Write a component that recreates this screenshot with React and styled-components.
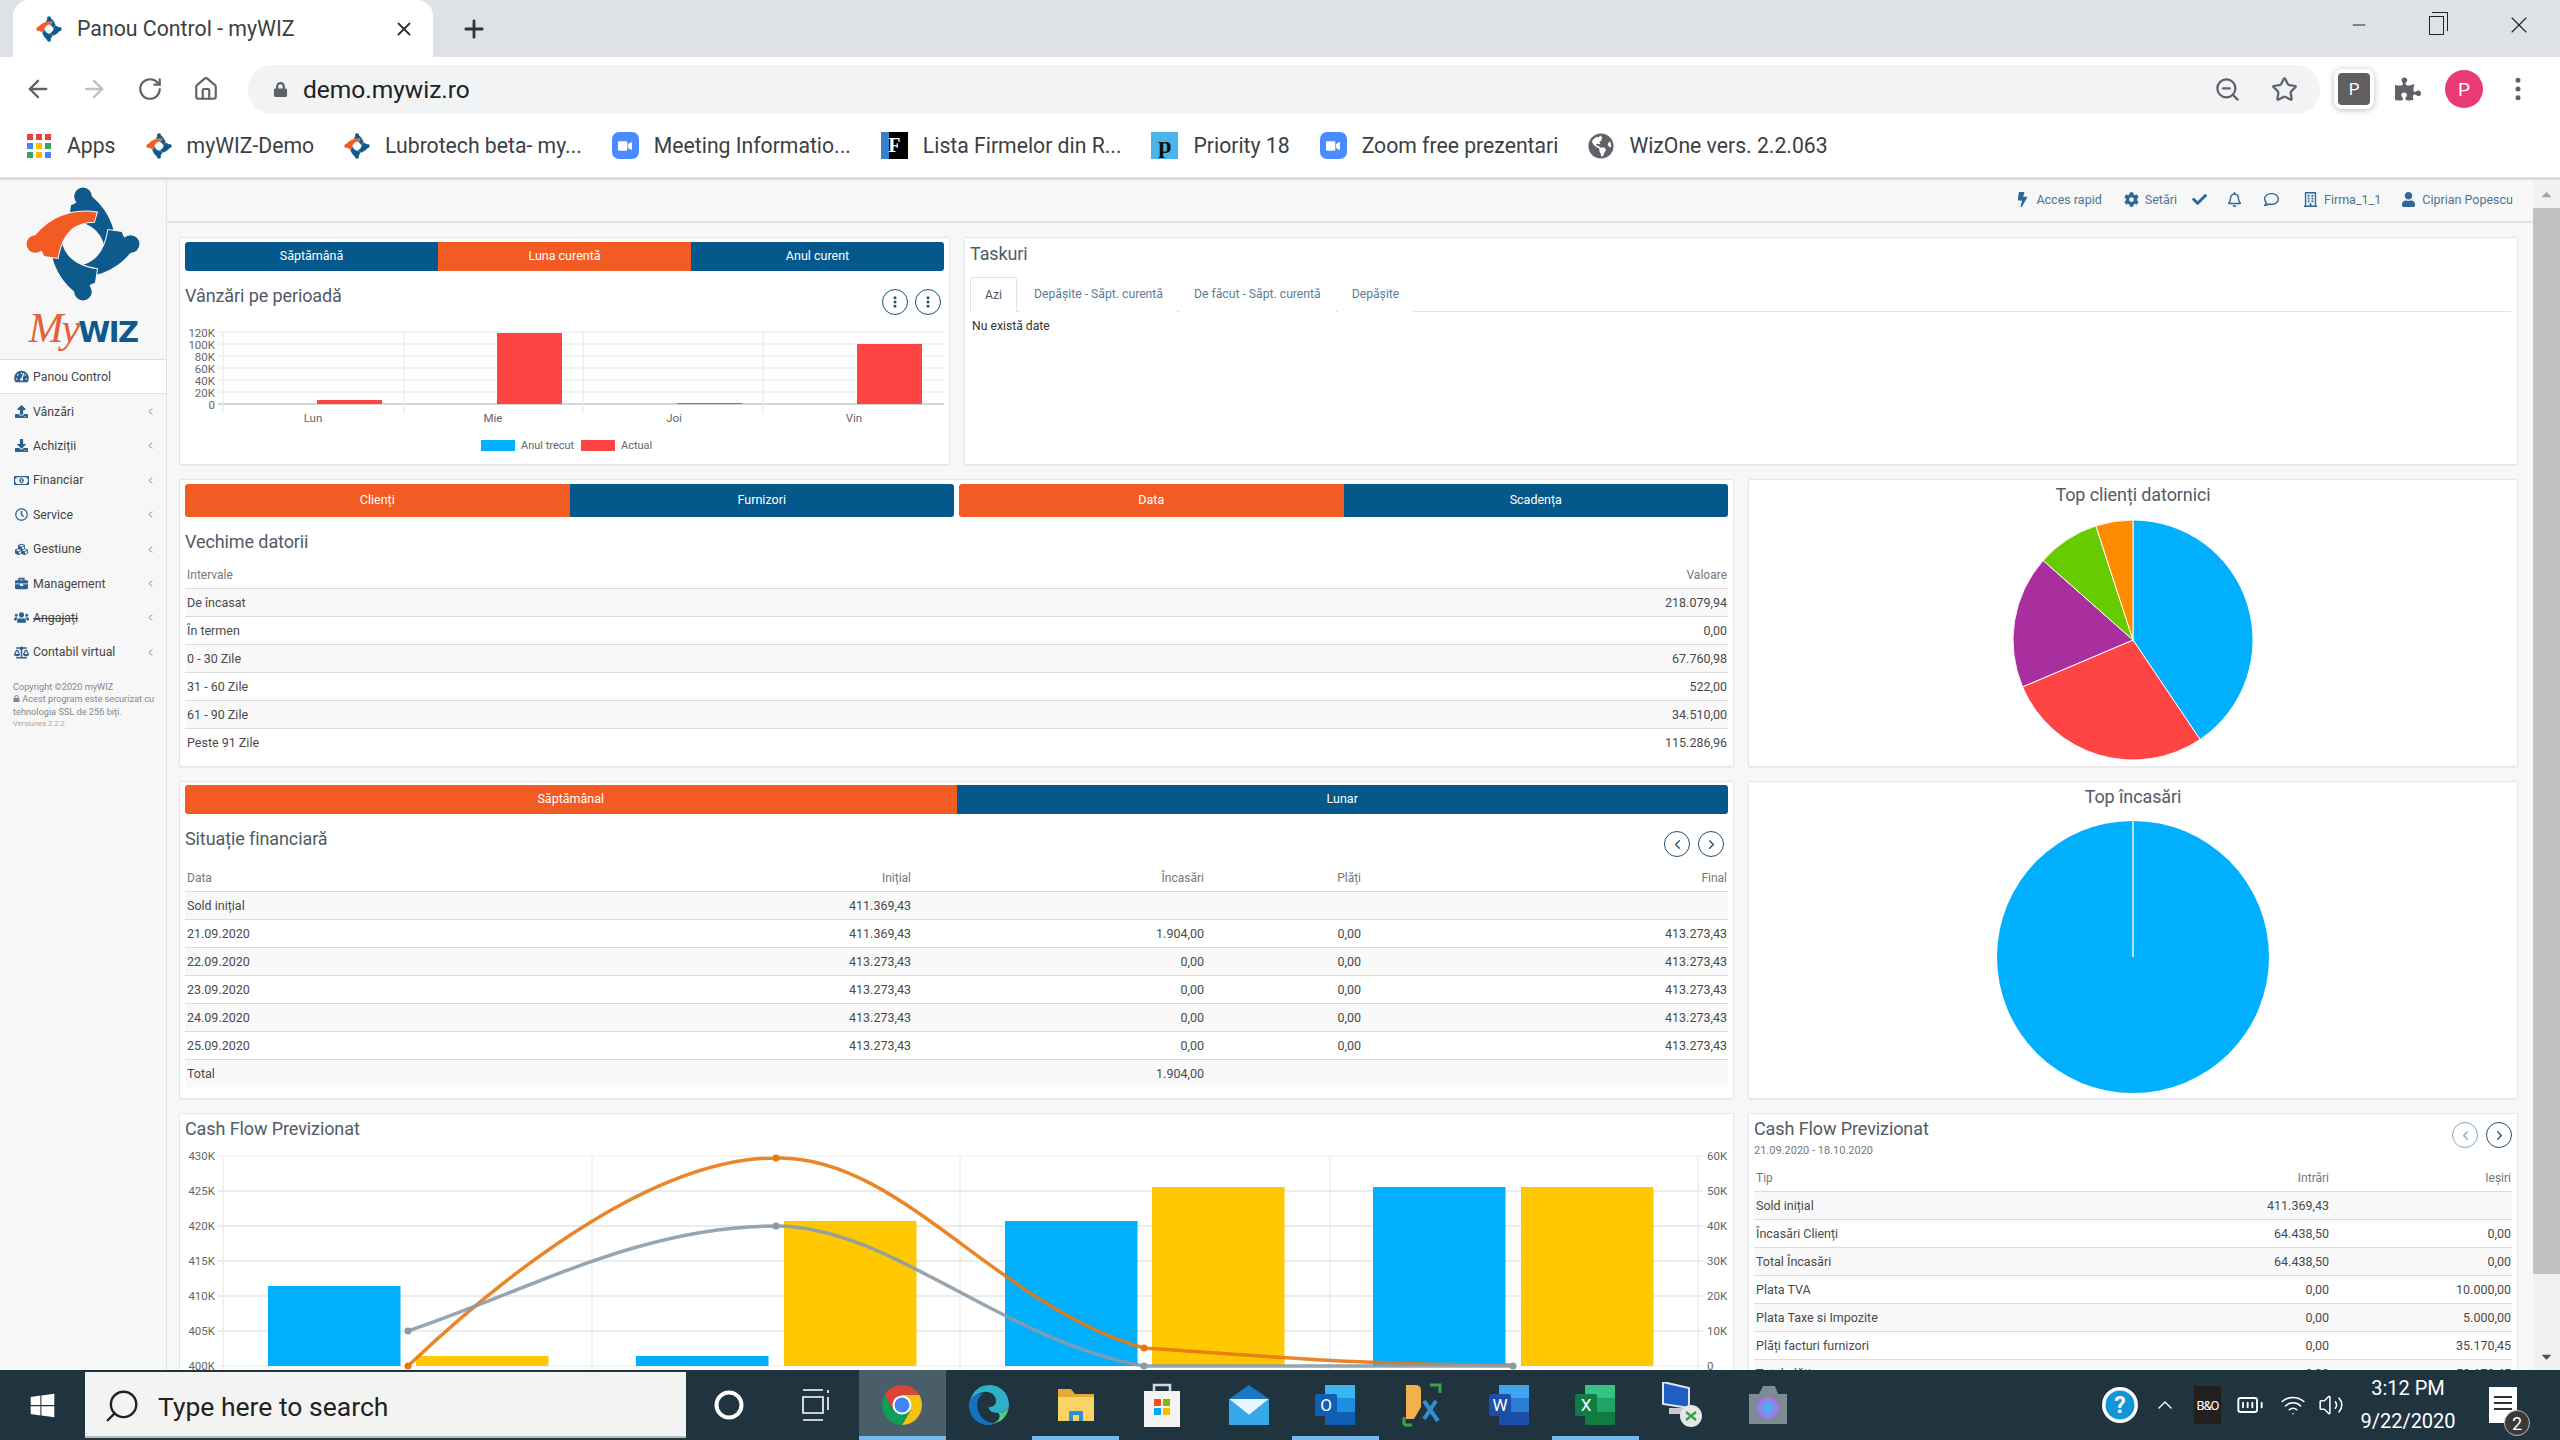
import React from "react";
import styled, { createGlobalStyle } from "styled-components";
import {
	ArrowLeft,
	ArrowRight,
	RotateCw,
	House,
	ZoomOut,
	Star,
	EllipsisVertical,
	Minus,
	X,
	Plus,
	ChevronLeft,
	ChevronRight,
	ChevronUp,
	Search,
	Volume2,
	Wifi,
	BatteryFull,
} from "lucide-react";
import {
	FaTachometerAlt,
	FaUpload,
	FaDownload,
	FaRegMoneyBillAlt,
	FaRegClock,
	FaCubes,
	FaBriefcase,
	FaUsers,
	FaBalanceScale,
	FaBolt,
	FaCog,
	FaCheck,
	FaRegBell,
	FaRegComment,
	FaRegBuilding,
	FaUser,
	FaLock,
	FaPuzzlePiece,
	FaWindows,
	FaCaretUp,
	FaCaretDown,
	FaGlobeAmericas,
	FaVideo,
} from "react-icons/fa";

const UI_FONT = `"Roboto", "Liberation Sans", sans-serif`;
const BLUE = "#05588c";
const ORANGE = "#f35b25";

const GlobalStyle = createGlobalStyle`
	html, body { margin: 0; padding: 0; background: #fff; }
	* { box-sizing: border-box; }
	body { font-family: ${UI_FONT}; color: #444; }
`;

const Screen = styled.div`
	width: 2560px;
	height: 1440px;
	overflow: hidden;
	display: flex;
	flex-direction: column;
`;

/* browser chrome */
const TabStrip = styled.div`
	height: 57px;
	flex: none;
	background: #dee1e6;
	display: flex;
	align-items: flex-end;
	padding: 0 13px 0 13px;
	color: #333;
`;
const Tab = styled.div`
	width: 420px;
	height: 57px;
	background: #fff;
	border-radius: 16px 16px 0 0;
	display: flex;
	align-items: center;
	padding: 0 18px 0 23px;
	gap: 15px;
`;
const TabTitle = styled.span`
	flex: 1;
	font-size: 21.3px;
	color: #3c4043;
`;
const NewTab = styled.div`
	margin-left: 27px;
	height: 57px;
	display: flex;
	align-items: center;
	color: #333;
`;
const WindowControls = styled.div`
	margin-left: auto;
	height: 50px;
	align-self: flex-start;
	display: flex;
	align-items: center;
	gap: 60px;
	padding-right: 14px;
	color: #222;
`;
const RestoreIcon = styled.span`
	width: 15px;
	height: 19px;
	margin-right: 1px;
	border: 1.5px solid #222;
	position: relative;
	&::after {
		content: "";
		position: absolute;
		left: 2px;
		top: -5px;
		width: 15px;
		height: 18px;
		border-top: 1.5px solid #222;
		border-right: 1.5px solid #222;
	}
`;
const Toolbar = styled.div`
	height: 61px;
	flex: none;
	background: #fff;
	display: flex;
	align-items: center;
	padding: 3px 25px 0 24px;
	color: #5f6368;
`;
const NavIcon = styled.span`
	width: 28px;
	margin-right: 28px;
	display: flex;
	justify-content: center;
	color: ${(p) => (p.$off ? "#bdc1c6" : "#5f6368")};
	&:last-of-type {
		margin-right: 11px;
	}
`;
const Omnibox = styled.div`
	width: 2072px;
	height: 49px;
	background: #f1f3f4;
	border-radius: 25px;
	display: flex;
	align-items: center;
	padding: 0 22px 0 25px;
	color: #5f6368;
`;
const Url = styled.span`
	margin-left: 15px;
	font-size: 24.5px;
	color: #202124;
	flex: 1;
`;
const OmniIcon = styled.span`
	display: flex;
	margin-left: 30px;
`;
const ExtBadge = styled.div`
	margin-left: 18px;
	width: 32px;
	height: 32px;
	border-radius: 4px;
	background: #5f5f5f;
	color: #fff;
	font-size: 17px;
	display: flex;
	align-items: center;
	justify-content: center;
	box-shadow: 0 0 0 4px #fff, 0 1px 6px 4px #bbb;
`;
const ToolIcon = styled.span`
	display: flex;
	margin-left: ${(p) => p.$gap}px;
`;
const Avatar = styled.div`
	margin-left: 24px;
	width: 38px;
	height: 38px;
	border-radius: 50%;
	background: #ea3a75;
	color: #fff;
	font-size: 19px;
	display: flex;
	align-items: center;
	justify-content: center;
`;
const BookmarkBar = styled.div`
	height: 62px;
	flex: none;
	background: #fff;
	border-bottom: 3px solid #dcdcdc;
	display: flex;
	align-items: center;
	padding: 0 0 4px 27px;
	gap: 30px;
`;
const Bookmark = styled.div`
	display: flex;
	align-items: center;
	gap: 15px;
	font-size: 21.2px;
	color: #3c4043;
	white-space: nowrap;
`;
const AppsGrid = styled.div`
	width: 25px;
	height: 24px;
	display: grid;
	grid-template-columns: repeat(3, 6px);
	grid-auto-rows: 6px;
	gap: 3px;
`;
const AppDot = styled.span`
	background: ${(p) => p.$c};
`;
const ZoomBadge = styled.span`
	width: 27px;
	height: 27px;
	border-radius: 7px;
	background: #4a8cff;
	color: #fff;
	display: flex;
	align-items: center;
	justify-content: center;
	font-size: 14px;
`;
const ListaBadge = styled.span`
	width: 27px;
	height: 27px;
	background: linear-gradient(90deg, #3a80c9 0 30%, #000 30%);
	color: #fff;
	font: bold 20px "Liberation Serif", serif;
	display: flex;
	align-items: center;
	justify-content: center;
`;
const PriorityBadge = styled.span`
	width: 27px;
	height: 27px;
	background: #4cb4e8;
	color: #111;
	font: bold 24px "Liberation Serif", serif;
	display: flex;
	align-items: center;
	justify-content: center;
`;

/* application frame */
const Body = styled.div`
	flex: 1;
	min-height: 0;
	display: flex;
	background: #f7f7f7;
`;
const Sidebar = styled.aside`
	width: 166px;
	flex: none;
	background: #f7f7f7;
	display: flex;
	flex-direction: column;
`;
const LogoBox = styled.div`
	height: 180px;
	flex: none;
	border-bottom: 1px solid #dedede;
	padding-top: 6px;
	display: flex;
	flex-direction: column;
	align-items: center;
`;
const Wordmark = styled.div`
	display: flex;
	align-items: baseline;
	margin-top: 2px;
	height: 44px;
	line-height: 44px;
`;
const WordMy = styled.span`
	font: italic 42px "Liberation Serif", serif;
	color: #e3603a;
	letter-spacing: -2px;
`;
const WordWiz = styled.span`
	font: bold 29px "DejaVu Sans", sans-serif;
	color: #0f5a8c;
	letter-spacing: -1.5px;
`;
const MenuItem = styled.div`
	height: 34.4px;
	flex: none;
	display: flex;
	align-items: center;
	padding: 0 10px 0 14px;
	font-size: 12.3px;
	color: #444;
	background: ${(p) => (p.$active ? "#fff" : "transparent")};
	border-bottom: ${(p) => (p.$active ? "1px solid #dedede" : "0")};
	svg:first-child {
		width: 15px;
		height: 13px;
		color: #2d6190;
		flex: none;
	}
`;
const MenuLabel = styled.span`
	flex: 1;
	margin-left: 4px;
	text-decoration: ${(p) => (p.$strike ? "line-through" : "none")};
`;
const Copyright = styled.div`
	padding: 11px 0 0 13px;
	font-size: 9.2px;
	line-height: 12.5px;
	color: #888;
	small {
		display: block;
		font-size: 7.5px;
		color: #aaa;
	}
`;
const Main = styled.main`
	flex: 1;
	min-width: 0;
	border-left: 1px solid #e2e2e2;
	display: flex;
	flex-direction: column;
`;
const TopNav = styled.header`
	height: 43px;
	flex: none;
	margin-left: -1px;
	border-bottom: 2px solid #e3e3e3;
	display: flex;
	align-items: center;
	justify-content: flex-end;
	padding: 0 20px 2px 0;
	font-size: 12.5px;
	color: #4e7398;
`;
const NavEntry = styled.span`
	display: flex;
	align-items: center;
	gap: 6px;
	margin-left: ${(p) => p.$gap}px;
	svg {
		color: #2f6797;
		font-size: 15px;
	}
`;
const Content = styled.div`
	flex: 1;
	min-height: 0;
	overflow: hidden;
	padding: 14px 15px 0 12px;
	display: flex;
	flex-direction: column;
	gap: 14px;
`;
const CardRow = styled.div`
	display: flex;
	gap: 14px;
	height: ${(p) => p.$h}px;
	flex: none;
`;
const Card = styled.section`
	width: ${(p) => p.$w}px;
	flex: none;
	background: #fff;
	border: 1px solid #e4e7ea;
	border-radius: 2px;
	box-shadow: 0 1px 1px rgba(0, 0, 0, 0.05);
	padding: ${(p) => p.$pt}px 5px 0 5px;
	overflow: hidden;
`;
const Segments = styled.div`
	display: flex;
	height: ${(p) => p.$h}px;
	border-radius: 3px;
	overflow: hidden;
	flex: 1;
`;
const Segment = styled.div`
	flex: 1;
	background: ${(p) => (p.$on ? ORANGE : BLUE)};
	color: #fff;
	font-size: 12.5px;
	padding-bottom: 2px;
	display: flex;
	align-items: center;
	justify-content: center;
`;
const SegmentPair = styled.div`
	display: flex;
	gap: 5px;
`;
const Title = styled.h3`
	margin: ${(p) => p.$mt || 0}px 0 0;
	font-size: 18px;
	font-weight: 400;
	line-height: 20px;
	color: #515b66;
	letter-spacing: -0.1px;
	text-align: ${(p) => (p.$center ? "center" : "left")};
`;
const TitleRow = styled.div`
	display: flex;
	justify-content: space-between;
	align-items: flex-start;
	height: ${(p) => (p.$h ? `${p.$h}px` : "auto")};
	margin-top: ${(p) => p.$mt || 0}px;
`;
const CircleBtns = styled.div`
	display: flex;
	gap: ${(p) => p.$gap}px;
	margin-top: ${(p) => p.$mt}px;
	padding-right: ${(p) => p.$pr}px;
`;
const CircleBtn = styled.span`
	width: 26px;
	height: 26px;
	border-radius: 50%;
	border: 1px solid ${(p) => (p.$dim ? "#8ba7b8" : "#21506f")};
	display: flex;
	align-items: center;
	justify-content: center;
	color: ${(p) => (p.$dim ? "#8ba7b8" : "#21506f")};
	background: #fff;
`;
const ChartSvg = styled.svg`
	display: block;
	margin: ${(p) => p.$mt}px 0 0 ${(p) => p.$ml}px;
	font-family: ${UI_FONT};
	font-size: 12px;
`;
const TabsLine = styled.div`
	margin-top: 13px;
	height: 35px;
	display: flex;
	border-bottom: 1px solid #e2e2e2;
	margin-right: 1px;
`;
const TaskTab = styled.div`
	padding: 0 14px 2px;
	height: ${(p) => (p.$on ? 36 : 35)}px;
	margin-right: 3px;
	display: flex;
	align-items: center;
	font-size: 12.2px;
	color: ${(p) => (p.$on ? "#555" : "#5a7d9c")};
	background: #fff;
	border: ${(p) => (p.$on ? "1px solid #e2e2e2" : "0")};
	border-bottom: 0;
	border-radius: 3px 3px 0 0;
`;
const Empty = styled.div`
	margin: 7px 0 0 2px;
	font-size: 12.2px;
	line-height: 14px;
	color: #333;
`;
const Table = styled.div`
	margin-top: ${(p) => p.$mt}px;
`;
const Line = styled.div`
	display: grid;
	grid-template-columns: ${(p) => p.$cols};
	height: 28px;
	align-items: center;
	font-size: 12.5px;
	color: #4a4a4a;
	background: ${(p) => (p.$striped ? "#f9f9f9" : "#fff")};
	border-top: ${(p) => (p.$head ? "0" : "1px solid #dcdcdc")};
	${(p) => p.$head && "color: #777; font-size: 12px; padding-top: 2px;"}
`;
const Cell = styled.span`
	padding: 0 1px 0 2px;
	text-align: ${(p) => (p.$right ? "right" : "left")};
	white-space: nowrap;
`;
const DateRange = styled.div`
	margin-top: 5px;
	font-size: 11px;
	line-height: 14px;
	color: #777;
`;
const Scrollbar = styled.div`
	width: 27px;
	flex: none;
	background: #f1f1f1;
	display: flex;
	flex-direction: column;
	align-items: center;
	color: #555;
`;
const ScrollArrow = styled.div`
	height: 28px;
	flex: none;
	display: flex;
	align-items: center;
	justify-content: center;
	font-size: 15px;
	color: ${(p) => (p.$dim ? "#a3a3a3" : "#505050")};
`;
const ScrollThumb = styled.div`
	width: 100%;
	height: 1066px;
	flex: none;
	background: #c1c1c1;
`;
const ScrollRest = styled.div`
	flex: 1;
`;

/* taskbar */
const Taskbar = styled.footer`
	height: 70px;
	flex: none;
	background: #20343f;
	display: flex;
	align-items: stretch;
	color: #fff;
`;
const StartButton = styled.div`
	width: 85px;
	flex: none;
	display: flex;
	align-items: center;
	justify-content: center;
	font-size: 27px;
`;
const SearchBox = styled.div`
	width: 601px;
	flex: none;
	margin: 2px 0;
	background: #f3f3f3;
	display: flex;
	align-items: center;
	padding: 4px 0 0 18px;
	gap: 17px;
	color: #222;
	font-size: 26.5px;
	border-bottom: 2px solid #bbb;
`;
const SearchGlass = styled(Search)`
	transform: scaleX(-1);
`;
const TaskSlot = styled.div`
	width: 86.6px;
	flex: none;
	display: flex;
	align-items: center;
	justify-content: center;
	position: relative;
	background: ${(p) => (p.$active ? "#4a5e6a" : "transparent")};
	&::after {
		content: "";
		display: ${(p) => (p.$open ? "block" : "none")};
		position: absolute;
		left: 0;
		right: 0;
		bottom: 0;
		height: 4px;
		background: #76b9ed;
	}
`;
const Tray = styled.div`
	margin-left: auto;
	display: flex;
	align-items: center;
	padding-right: 43px;
`;
const TrayItem = styled.span`
	display: flex;
	align-items: center;
	margin-left: ${(p) => p.$gap}px;
`;
const BoBadge = styled.span`
	background: #221f1f;
	font-size: 13px;
	letter-spacing: -1px;
	width: 27px;
	height: 38px;
	display: flex;
	align-items: center;
	justify-content: center;
`;
const Clock = styled.div`
	margin-left: 8px;
	width: 112px;
	text-align: center;
	font-size: 20px;
	line-height: 33px;
	color: #fff;
`;
const Notify = styled.div`
	margin-left: 25px;
	position: relative;
	width: 28px;
	height: 36px;
	padding: 9px 5px 0;
	background: #fff;
	display: flex;
	flex-direction: column;
	gap: 4px;
`;
const NotifyLine = styled.span`
	height: 2px;
	background: #333;
`;
const NotifyCount = styled.span`
	position: absolute;
	right: -13px;
	bottom: -13px;
	width: 26px;
	height: 26px;
	border-radius: 50%;
	background: #3a3a3a;
	border: 1px solid #bbb;
	font-size: 18px;
	display: flex;
	align-items: center;
	justify-content: center;
`;

/* drawings */
const ARM = "M-52,-1 C-40,-20 -18,-36 14,-31 L11,-21 C-6,-21 -20,-12 -24,14 L-38,12 C-39,7 -42,4 -48,4 Z";
function LogoMark({ size = 102 }) {
	return (
		<svg width={size} height={size} viewBox="-56 -56 112 112">
			{[90, 180, 270, 0].map((r) => (
				<g key={r} transform={`rotate(${r})`} fill={r === 0 ? ORANGE : "#0f5a8c"}>
					<path d={ARM} stroke="#f7f7f7" strokeWidth="1" />
					<circle cx="-46" cy="0" r="8.5" />
				</g>
			))}
		</svg>
	);
}

function pieSlices(values) {
	let start = 0;
	return values.map(([deg, color]) => {
		const end = start + deg;
		const pt = (a) => [Math.sin((a * Math.PI) / 180), -Math.cos((a * Math.PI) / 180)];
		const [x1, y1] = pt(start);
		const [x2, y2] = pt(end);
		const d = `M0,0 L${x1},${y1} A1,1 0 ${deg > 180 ? 1 : 0} 1 ${x2},${y2} Z`;
		start = end;
		return { d, color };
	});
}

const PieSvg = styled.svg`
	display: block;
	margin: ${(p) => p.$mt}px auto 0;
`;

function ClientsPie() {
	const slices = pieSlices([
		[146, "#00b0ff"],
		[101, "#ff4444"],
		[64.5, "#aa2f9e"],
		[30.5, "#66cc00"],
		[18, "#ff8c00"],
	]);
	return (
		<PieSvg width="240" height="240" viewBox="-1 -1 2 2" $mt={15}>
			{slices.map((s) => (
				<path key={s.color} d={s.d} fill={s.color} stroke="#fff" strokeWidth="0.008" />
			))}
		</PieSvg>
	);
}

function RevenuePie() {
	return (
		<PieSvg width="272" height="272" viewBox="-136 -136 272 272" $mt={14}>
			<circle r="136" fill="#00b0ff" />
			<line x1="0" y1="0" x2="0" y2="-136" stroke="#e8f6ff" strokeWidth="1.5" />
		</PieSvg>
	);
}

const salesBars = [
	[317, 401],
	[497, 334],
	[677, 404],
	[857, 345],
];

function SalesChart() {
	const ys = [333, 345, 357, 369, 381, 393, 405];
	const labels = ["120K", "100K", "80K", "60K", "40K", "20K", "0"];
	return (
		<ChartSvg width="768" height="140" viewBox="180 320 768 140" $mt={13} $ml={-5}>
			{ys.map((y, i) => (
				<g key={y}>
					<line x1="218" x2="944" y1={y} y2={y} stroke={i === 6 ? "#aaa" : "#e6e6e6"} />
					<text x="215" y={y + 4.5} textAnchor="end" fill="#666" fontSize="11.5">
						{labels[i]}
					</text>
				</g>
			))}
			{[223, 404, 583, 763].map((x) => (
				<line key={x} x1={x} x2={x} y1="333" y2="415" stroke="#e6e6e6" />
			))}
			{salesBars.map(([x, y]) => (
				<rect key={x} x={x} y={y} width="65" height={405 - y} fill="#ff4444" />
			))}
			{[
				["Lun", 313],
				["Mie", 493],
				["Joi", 674],
				["Vin", 854],
			].map(([t, x]) => (
				<text key={t} x={x} y="423" textAnchor="middle" fill="#666" fontSize="11.5">
					{t}
				</text>
			))}
			<rect x="481" y="441" width="34" height="11" fill="#00b0ff" />
			<text x="521" y="450" fill="#666" fontSize="11">
				Anul trecut
			</text>
			<rect x="581" y="441" width="34" height="11" fill="#ff4444" />
			<text x="621" y="450" fill="#666" fontSize="11">
				Actual
			</text>
		</ChartSvg>
	);
}

const flowBars = [
	[268, 1286, "#00b0ff"],
	[416, 1356, "#ffc800"],
	[636, 1356, "#00b0ff"],
	[784, 1221, "#ffc800"],
	[1005, 1221, "#00b0ff"],
	[1152, 1187, "#ffc800"],
	[1373, 1187, "#00b0ff"],
	[1521, 1187, "#ffc800"],
];

function CashChart() {
	const ys = [1156, 1191, 1226, 1261, 1296, 1331, 1366];
	const left = ["430K", "425K", "420K", "415K", "410K", "405K", "400K"];
	const right = ["60K", "50K", "40K", "30K", "20K", "10K", "0"];
	return (
		<ChartSvg width="1550" height="235" viewBox="180 1145 1550 235" $mt={6} $ml={-5}>
			{ys.map((y, i) => (
				<g key={y}>
					<line x1="218" x2="1703" y1={y} y2={y} stroke="#ececec" strokeWidth={i === 6 || i === 0 ? 1 : 2} />
					<text x="215" y={y + 4} textAnchor="end" fill="#666" fontSize="11.5">
						{left[i]}
					</text>
					<text x="1707" y={y + 4} fill="#666" fontSize="11.5">
						{right[i]}
					</text>
				</g>
			))}
			{[223, 592, 960, 1330, 1698].map((x) => (
				<line key={x} x1={x} x2={x} y1="1156" y2="1380" stroke="#e6e6e6" />
			))}
			{flowBars.map(([x, y, c]) => (
				<rect key={x} x={x} y={y} width="132.5" height={1366 - y} fill={c} />
			))}
			<path
				d="M408,1366 C520,1260 660,1158 776,1158 C900,1155 997,1307 1144,1348 C1291,1358 1365,1365 1513,1365"
				fill="none"
				stroke="#e8790f"
				strokeWidth="3.5"
				strokeOpacity="0.9"
			/>
			<path
				d="M408,1331 C530,1290 640,1226 776,1226 C890,1226 1000,1340 1144,1366 L1513,1366"
				fill="none"
				stroke="#8a9ba8"
				strokeWidth="3.5"
				strokeOpacity="0.9"
			/>
			{[
				[408, 1366],
				[776, 1158],
				[1144, 1348],
			].map(([x, y]) => (
				<circle key={x} cx={x} cy={y} r="3.5" fill="#e8790f" />
			))}
			{[
				[408, 1331],
				[776, 1226],
				[1144, 1366],
				[1513, 1366],
			].map(([x, y]) => (
				<circle key={x} cx={x} cy={y} r="3.5" fill="#8a9ba8" />
			))}
		</ChartSvg>
	);
}

const DotsIcon = () => (
	<svg width="4" height="12" viewBox="0 0 4 12" fill="#21506f">
		<rect x="0.7" y="0.5" width="2.6" height="2.6" />
		<rect x="0.7" y="4.7" width="2.6" height="2.6" />
		<rect x="0.7" y="8.9" width="2.6" height="2.6" />
	</svg>
);

/* taskbar app icons */
const ChromeIcon = () => (
	<svg width="40" height="40" viewBox="-20 -20 40 40">
		<path d="M0,-20 A20,20 0 0 1 17.3,-10 L0,-10 Z M-17.3,-10 A20,20 0 0 1 0,-20 L0,-10 L-8.6,5 Z" fill="#db4437" />
		<path d="M17.3,-10 A20,20 0 0 1 0,20 L8.6,5 L0,-10 Z" fill="#f4c20d" />
		<path d="M-17.3,-10 A20,20 0 0 0 0,20 L8.6,5 L-8.6,5 Z" fill="#0f9d58" />
		<circle r="9.5" fill="#fff" />
		<circle r="7.5" fill="#4285f4" />
	</svg>
);
const EdgeIcon = () => (
	<svg width="42" height="42" viewBox="0 0 42 42">
		<path d="M21,1 C33,1 41,10 41,21 C41,27 36,29 30,29 C24,29 20,26 21,23 C24,23 28,22 28,17 C28,11 22,7 16,8 C8,9 2,16 1,22 C2,10 10,1 21,1 Z" fill="#2fb0c9" />
		<path d="M1,22 C1,14 8,9 15,10 C10,13 8,19 10,26 C12,34 20,40 28,39 C24,41 22,41 21,41 C10,41 1,33 1,22 Z" fill="#1570c2" />
		<path d="M41,24 C38,34 32,39 25,39 C34,36 32,30 30,29 C36,29 39,27 41,24 Z" fill="#52d17c" />
	</svg>
);
const FolderIcon = () => (
	<svg width="40" height="40" viewBox="0 0 40 40">
		<path d="M2,4 H15 L19,9 H38 V36 H2 Z" fill="#e8a93a" />
		<rect x="2" y="12" width="36" height="24" fill="#fbd467" />
		<path d="M13,36 V26 H27 V36 H23 V30 H17 V36 Z" fill="#2f8fd6" />
	</svg>
);
const StoreIcon = () => (
	<svg width="40" height="46" viewBox="0 0 40 46">
		<path d="M12,10 V3 H28 V10" fill="none" stroke="#d8d8d8" strokeWidth="2.5" />
		<rect x="2" y="9" width="36" height="36" fill="#f4f4f4" />
		<rect x="12" y="17" width="7" height="7" fill="#f25022" />
		<rect x="21" y="17" width="7" height="7" fill="#7fba00" />
		<rect x="12" y="26" width="7" height="7" fill="#00a4ef" />
		<rect x="21" y="26" width="7" height="7" fill="#ffb900" />
	</svg>
);
const MailIcon = () => (
	<svg width="44" height="40" viewBox="0 0 44 40">
		<path d="M2,14 L22,0 L42,14 V40 H2 Z" fill="#1a78c2" />
		<path d="M2,14 H42 L22,30 Z" fill="#eaf6ff" />
		<path d="M2,14 L22,30 L42,14 V40 H2 Z" fill="#35a9e8" />
	</svg>
);
const OfficeIcon = ({ letter, dark, mid, light }) => (
	<svg width="44" height="44" viewBox="0 0 44 44">
		<rect x="12" y="2" width="30" height="40" rx="2" fill={mid} />
		<rect x="12" y="2" width="30" height="13" fill={light} />
		<rect x="12" y="29" width="30" height="13" fill={dark} />
		<rect x="2" y="11" width="22" height="22" rx="2" fill={dark} />
		<text x="13" y="28" textAnchor="middle" fontSize="17" fontFamily="Roboto" fill="#fff">
			{letter}
		</text>
	</svg>
);
const ToolsIcon = () => (
	<svg width="40" height="44" viewBox="0 0 40 44">
		<path d="M4,2 H14 A5,5 0 0 1 19,7 V24 L12,36 H4 Z" fill="#f1b24a" />
		<path d="M28,2 H38 V10 M2,42 V34 M2,42 H10" fill="none" stroke="#3fa04c" strokeWidth="3" />
		<path d="M22,36 L34,18 M22,18 L36,38" stroke="#2f8fd6" strokeWidth="4" />
	</svg>
);
const RemoteIcon = () => (
	<svg width="42" height="46" viewBox="0 0 42 46">
		<path d="M2,0 L28,6 V26 L2,22 Z" fill="#1f5fc4" stroke="#dfe6f2" strokeWidth="2" />
		<rect x="8" y="26" width="16" height="6" fill="#c9c9c9" />
		<circle cx="30" cy="34" r="11" fill="#e6e6e6" />
		<path d="M25,30 L30,34 L25,38 M35,30 L30,34 L35,38" fill="none" stroke="#37a24a" strokeWidth="2.5" />
	</svg>
);
const CameraIcon = () => (
	<svg width="42" height="42" viewBox="0 0 42 42">
		<path d="M2,10 H12 L16,2 H28 L31,10 H40 V40 H2 Z" fill="#7c8b94" />
		<circle cx="21" cy="24" r="11" fill="#9b7be8" />
		<circle cx="21" cy="24" r="6.5" fill="#5aa8ee" />
	</svg>
);
const HelpIcon = () => (
	<svg width="38" height="38" viewBox="0 0 38 38">
		<circle cx="19" cy="19" r="18" fill="#fff" />
		<circle cx="19" cy="19" r="14.5" fill="#1295d8" />
		<text x="19" y="27" textAnchor="middle" fontSize="23" fontWeight="700" fontFamily="Roboto" fill="#fff">
			?
		</text>
	</svg>
);

const menu = [
	[FaUpload, "Vânzări"],
	[FaDownload, "Achiziții"],
	[FaRegMoneyBillAlt, "Financiar"],
	[FaRegClock, "Service"],
	[FaCubes, "Gestiune"],
	[FaBriefcase, "Management"],
	[FaUsers, "Angajați", true],
	[FaBalanceScale, "Contabil virtual"],
];

const agingRows = [
	["De încasat", "218.079,94"],
	["În termen", "0,00"],
	["0 - 30 Zile", "67.760,98"],
	["31 - 60 Zile", "522,00"],
	["61 - 90 Zile", "34.510,00"],
	["Peste 91 Zile", "115.286,96"],
];

const financeRows = [
	["Sold inițial", "411.369,43", "", "", ""],
	["21.09.2020", "411.369,43", "1.904,00", "0,00", "413.273,43"],
	["22.09.2020", "413.273,43", "0,00", "0,00", "413.273,43"],
	["23.09.2020", "413.273,43", "0,00", "0,00", "413.273,43"],
	["24.09.2020", "413.273,43", "0,00", "0,00", "413.273,43"],
	["25.09.2020", "413.273,43", "0,00", "0,00", "413.273,43"],
	["Total", "", "1.904,00", "", ""],
];

const cashRows = [
	["Sold inițial", "411.369,43", ""],
	["Încasări Clienți", "64.438,50", "0,00"],
	["Total Încasări", "64.438,50", "0,00"],
	["Plata TVA", "0,00", "10.000,00"],
	["Plata Taxe si Impozite", "0,00", "5.000,00"],
	["Plăți facturi furnizori", "0,00", "35.170,45"],
	["Total plăți", "0,00", "50.170,45"],
];

const FINANCE_COLS = "400px 327px 293px 157px 366px";
const CASH_COLS = "1fr 180px 182px";

function DataTable({ cols, head, rows, mt }) {
	return (
		<Table $mt={mt}>
			<Line $cols={cols} $head>
				{head.map((h, i) => (
					<Cell key={h} $right={i > 0}>
						{h}
					</Cell>
				))}
			</Line>
			{rows.map((row, r) => (
				<Line key={row[0]} $cols={cols} $striped={r % 2 === 0}>
					{row.map((c, i) => (
						<Cell key={i} $right={i > 0}>
							{c}
						</Cell>
					))}
				</Line>
			))}
		</Table>
	);
}

function BrowserChrome() {
	return (
		<>
			<TabStrip>
				<Tab>
					<LogoMark size={26} />
					<TabTitle>Panou Control - myWIZ</TabTitle>
					<X size={22} color="#333" />
				</Tab>
				<NewTab>
					<Plus size={28} strokeWidth={2.4} />
				</NewTab>
				<WindowControls>
					<Minus size={20} strokeWidth={1.2} />
					<RestoreIcon />
					<X size={28} strokeWidth={1} />
				</WindowControls>
			</TabStrip>
			<Toolbar>
				<NavIcon>
					<ArrowLeft size={28} />
				</NavIcon>
				<NavIcon $off>
					<ArrowRight size={28} />
				</NavIcon>
				<NavIcon>
					<RotateCw size={26} />
				</NavIcon>
				<NavIcon>
					<House size={26} />
				</NavIcon>
				<Omnibox>
					<FaLock size={15} />
					<Url>demo.mywiz.ro</Url>
					<ZoomOut size={27} />
					<OmniIcon>
						<Star size={27} />
					</OmniIcon>
				</Omnibox>
				<ExtBadge>P</ExtBadge>
				<ToolIcon $gap={25}>
					<FaPuzzlePiece size={26} />
				</ToolIcon>
				<Avatar>P</Avatar>
				<ToolIcon $gap={20}>
					<EllipsisVertical size={30} />
				</ToolIcon>
			</Toolbar>
			<BookmarkBar>
				<Bookmark>
					<AppsGrid>
						{["#ea4335", "#ea4335", "#ea4335", "#4285f4", "#fbbc05", "#34a853", "#34a853", "#fbbc05", "#4285f4"].map((c, i) => (
							<AppDot key={i} $c={c} />
						))}
					</AppsGrid>
					Apps
				</Bookmark>
				<Bookmark>
					<LogoMark size={26} />
					myWIZ-Demo
				</Bookmark>
				<Bookmark>
					<LogoMark size={26} />
					Lubrotech beta- my...
				</Bookmark>
				<Bookmark>
					<ZoomBadge>
						<FaVideo />
					</ZoomBadge>
					Meeting Informatio...
				</Bookmark>
				<Bookmark>
					<ListaBadge>F</ListaBadge>
					Lista Firmelor din R...
				</Bookmark>
				<Bookmark>
					<PriorityBadge>p</PriorityBadge>
					Priority 18
				</Bookmark>
				<Bookmark>
					<ZoomBadge>
						<FaVideo />
					</ZoomBadge>
					Zoom free prezentari
				</Bookmark>
				<Bookmark>
					<FaGlobeAmericas size={26} color="#5f6368" />
					WizOne vers. 2.2.063
				</Bookmark>
			</BookmarkBar>
		</>
	);
}

function App() {
	return (
		<Screen>
			<GlobalStyle />
			<BrowserChrome />
			<Body>
				<Sidebar>
					<LogoBox>
						<LogoMark size={116} />
						<Wordmark>
							<WordMy>My</WordMy>
							<WordWiz>WIZ</WordWiz>
						</Wordmark>
					</LogoBox>
					<MenuItem $active>
						<FaTachometerAlt />
						<MenuLabel>Panou Control</MenuLabel>
					</MenuItem>
					{menu.map(([Icon, label, strike]) => (
						<MenuItem key={label}>
							<Icon />
							<MenuLabel $strike={strike}>{label}</MenuLabel>
							<ChevronLeft size={11} color="#777" />
						</MenuItem>
					))}
					<Copyright>
						Copyright ©2020 myWIZ
						<br />
						<FaLock size={7} /> Acest program este securizat cu
						<br />
						tehnologia SSL de 256 biți.
						<small>Versiunea 2.2.2</small>
					</Copyright>
				</Sidebar>
				<Main>
					<TopNav>
						<NavEntry>
							<FaBolt />
							Acces rapid
						</NavEntry>
						<NavEntry $gap={22}>
							<FaCog />
							Setări
						</NavEntry>
						<NavEntry $gap={15}>
							<FaCheck />
						</NavEntry>
						<NavEntry $gap={20}>
							<FaRegBell />
						</NavEntry>
						<NavEntry $gap={22}>
							<FaRegComment />
						</NavEntry>
						<NavEntry $gap={24}>
							<FaRegBuilding />
							Firma_1_1
						</NavEntry>
						<NavEntry $gap={20}>
							<FaUser />
							Ciprian Popescu
						</NavEntry>
					</TopNav>
					<Content>
						<CardRow $h={228}>
							<Card $w={771} $pt={4}>
								<Segments $h={29}>
									<Segment>Săptămână</Segment>
									<Segment $on>Luna curentă</Segment>
									<Segment>Anul curent</Segment>
								</Segments>
								<TitleRow $h={20} $mt={15}>
									<Title>Vânzări pe perioadă</Title>
									<CircleBtns $gap={7} $mt={3} $pr={3}>
										<CircleBtn>
											<DotsIcon />
										</CircleBtn>
										<CircleBtn>
											<DotsIcon />
										</CircleBtn>
									</CircleBtns>
								</TitleRow>
								<SalesChart />
							</Card>
							<Card $w={1554} $pt={6}>
								<Title>Taskuri</Title>
								<TabsLine>
									<TaskTab $on>Azi</TaskTab>
									<TaskTab>Depășite - Săpt. curentă</TaskTab>
									<TaskTab>De făcut - Săpt. curentă</TaskTab>
									<TaskTab>Depășite</TaskTab>
								</TabsLine>
								<Empty>Nu există date</Empty>
							</Card>
						</CardRow>
						<CardRow $h={288}>
							<Card $w={1555} $pt={4}>
								<SegmentPair>
									<Segments $h={33}>
										<Segment $on>Clienți</Segment>
										<Segment>Furnizori</Segment>
									</Segments>
									<Segments $h={33}>
										<Segment $on>Data</Segment>
										<Segment>Scadența</Segment>
									</Segments>
								</SegmentPair>
								<Title $mt={15}>Vechime datorii</Title>
								<DataTable cols="1fr 300px" head={["Intervale", "Valoare"]} rows={agingRows} mt={8} />
							</Card>
							<Card $w={770} $pt={5}>
								<Title $center>Top clienți datornici</Title>
								<ClientsPie />
							</Card>
						</CardRow>
						<CardRow $h={318}>
							<Card $w={1555} $pt={3}>
								<Segments $h={29}>
									<Segment $on>Săptămânal</Segment>
									<Segment>Lunar</Segment>
								</Segments>
								<TitleRow $h={20} $mt={15}>
									<Title>Situație financiară</Title>
									<CircleBtns $gap={8} $mt={2} $pr={4}>
										<CircleBtn>
											<ChevronLeft size={15} />
										</CircleBtn>
										<CircleBtn>
											<ChevronRight size={15} />
										</CircleBtn>
									</CircleBtns>
								</TitleRow>
								<DataTable cols={FINANCE_COLS} head={["Data", "Inițial", "Încasări", "Plăți", "Final"]} rows={financeRows} mt={14} />
							</Card>
							<Card $w={770} $pt={5}>
								<Title $center>Top încasări</Title>
								<RevenuePie />
							</Card>
						</CardRow>
						<CardRow $h={300}>
							<Card $w={1555} $pt={5}>
								<Title>Cash Flow Previzionat</Title>
								<CashChart />
							</Card>
							<Card $w={770} $pt={5}>
								<TitleRow>
									<div>
										<Title>Cash Flow Previzionat</Title>
										<DateRange>21.09.2020 - 18.10.2020</DateRange>
									</div>
									<CircleBtns $gap={8} $mt={3} $pr={0}>
										<CircleBtn $dim>
											<ChevronLeft size={15} />
										</CircleBtn>
										<CircleBtn>
											<ChevronRight size={15} />
										</CircleBtn>
									</CircleBtns>
								</TitleRow>
								<DataTable cols={CASH_COLS} head={["Tip", "Intrări", "Ieșiri"]} rows={cashRows} mt={5} />
							</Card>
						</CardRow>
					</Content>
				</Main>
				<Scrollbar>
					<ScrollArrow $dim>
						<FaCaretUp />
					</ScrollArrow>
					<ScrollThumb />
					<ScrollRest />
					<ScrollArrow>
						<FaCaretDown />
					</ScrollArrow>
				</Scrollbar>
			</Body>
			<Taskbar>
				<StartButton>
					<FaWindows />
				</StartButton>
				<SearchBox>
					<SearchGlass size={38} strokeWidth={1.5} />
					Type here to search
				</SearchBox>
				<TaskSlot>
					<svg width="30" height="30" viewBox="0 0 30 30">
						<circle cx="15" cy="15" r="12.5" fill="none" stroke="#fff" strokeWidth="4" />
					</svg>
				</TaskSlot>
				<TaskSlot>
					<svg width="34" height="34" viewBox="0 0 34 34" fill="none" stroke="#fff" strokeWidth="1.6">
						<path d="M4,2 H24 M4,32 H24 M4,9 H24 V25 H4 Z M29,9 V22 M29,2 V5" />
					</svg>
				</TaskSlot>
				<TaskSlot $active $open>
					<ChromeIcon />
				</TaskSlot>
				<TaskSlot>
					<EdgeIcon />
				</TaskSlot>
				<TaskSlot $open>
					<FolderIcon />
				</TaskSlot>
				<TaskSlot>
					<StoreIcon />
				</TaskSlot>
				<TaskSlot>
					<MailIcon />
				</TaskSlot>
				<TaskSlot $open>
					<OfficeIcon letter="O" dark="#0f5fb5" mid="#1d8ee0" light="#38b6f0" />
				</TaskSlot>
				<TaskSlot>
					<ToolsIcon />
				</TaskSlot>
				<TaskSlot>
					<OfficeIcon letter="W" dark="#1b4fa8" mid="#2b7cd3" light="#41a5ee" />
				</TaskSlot>
				<TaskSlot $open>
					<OfficeIcon letter="X" dark="#107c41" mid="#21a366" light="#33c481" />
				</TaskSlot>
				<TaskSlot>
					<RemoteIcon />
				</TaskSlot>
				<TaskSlot>
					<CameraIcon />
				</TaskSlot>
				<Tray>
					<TrayItem>
						<HelpIcon />
					</TrayItem>
					<TrayItem $gap={14}>
						<ChevronUp size={24} strokeWidth={1.4} />
					</TrayItem>
					<TrayItem $gap={17}>
						<BoBadge>B&amp;O</BoBadge>
					</TrayItem>
					<TrayItem $gap={15}>
						<BatteryFull size={28} strokeWidth={1.6} />
					</TrayItem>
					<TrayItem $gap={16}>
						<Wifi size={26} strokeWidth={1.4} />
					</TrayItem>
					<TrayItem $gap={12}>
						<Volume2 size={26} strokeWidth={1.4} />
					</TrayItem>
					<Clock>
						3:12 PM
						<br />
						9/22/2020
					</Clock>
					<Notify>
						<NotifyLine />
						<NotifyLine />
						<NotifyLine />
						<NotifyCount>2</NotifyCount>
					</Notify>
				</Tray>
			</Taskbar>
		</Screen>
	);
}

export default App;
